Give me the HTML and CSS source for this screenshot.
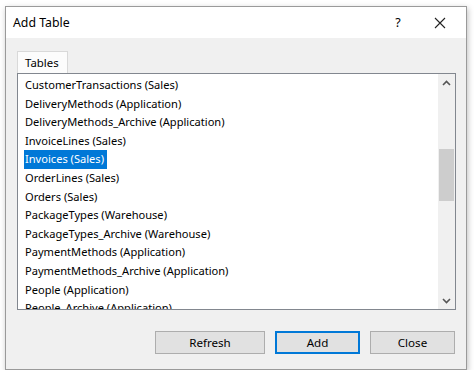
FILE: index.html
```
<!DOCTYPE html>
<html lang="en">
<head>
    <meta charset="UTF-8">
    <title>Add Table</title>
    <link rel="stylesheet" href="styles.css">
</head>
<body>
    <div class="dialog">
        <div class="title-bar">
            <span class="title">Add Table</span>
            <span class="help">?</span>
            <span class="close-x">
                <svg width="12" height="12" viewBox="0 0 12 12"><path d="M1 1 L11 11 M11 1 L1 11" stroke="#222" stroke-width="1.1" fill="none"/></svg>
            </span>
        </div>
        <div class="body">
            <div class="tabs">
                <div class="tab">Tables</div>
            </div>
            <div class="list-box">
                <ul class="list">
                    <li><span>CustomerTransactions (Sales)</span></li>
                    <li><span>DeliveryMethods (Application)</span></li>
                    <li><span>DeliveryMethods_Archive (Application)</span></li>
                    <li><span>InvoiceLines (Sales)</span></li>
                    <li class="selected"><span>Invoices (Sales)</span></li>
                    <li><span>OrderLines (Sales)</span></li>
                    <li><span>Orders (Sales)</span></li>
                    <li><span>PackageTypes (Warehouse)</span></li>
                    <li><span>PackageTypes_Archive (Warehouse)</span></li>
                    <li><span>PaymentMethods (Application)</span></li>
                    <li><span>PaymentMethods_Archive (Application)</span></li>
                    <li><span>People (Application)</span></li>
                    <li><span>People_Archive (Application)</span></li>
                </ul>
                <div class="scrollbar">
                    <div class="arrow">
                        <svg width="9" height="6" viewBox="0 0 9 6"><path d="M1 5 L4.5 1.5 L8 5" stroke="#555" stroke-width="1.6" fill="none"/></svg>
                    </div>
                    <div class="track">
                        <div class="thumb"></div>
                    </div>
                    <div class="arrow">
                        <svg width="9" height="6" viewBox="0 0 9 6"><path d="M1 1 L4.5 4.5 L8 1" stroke="#555" stroke-width="1.6" fill="none"/></svg>
                    </div>
                </div>
            </div>
            <div class="buttons">
                <button class="btn">Refresh</button>
                <button class="btn default">Add</button>
                <button class="btn">Close</button>
            </div>
        </div>
    </div>
</body>
</html>
```

FILE: styles.css
```
body {
    margin: 0;
    background: #ffffff;
    font-family: "Noto Sans", "Open Sans", sans-serif;
    color: #000;
}
.dialog {
    width: 460px;
    height: 362px;
    margin: 6px 0 0 5px;
    border: 1px solid #9a9a9a;
    background: #f0f0f0;
    box-shadow: 1px 2px 6px rgba(0, 0, 0, 0.25);
    display: flex;
    flex-direction: column;
}
.title-bar {
    height: 31px;
    background: #ffffff;
    display: flex;
    align-items: center;
    padding-left: 7px;
}
.title {
    font-size: 12.3px;
    flex: 1;
}
.help {
    font-size: 12.5px;
    width: 20px;
    margin-right: 26px;
    text-align: center;
}
.close-x {
    width: 14px;
    margin-right: 18px;
    display: flex;
    align-items: center;
}
.body {
    flex: 1;
    padding: 13px 10px 0 11px;
}
.tabs {
    display: flex;
    height: 22px;
}
.tab {
    border: 1px solid #d9d9d9;
    border-bottom: none;
    background: #fcfcfc;
    font-size: 11.4px;
    line-height: 21px;
    padding-left: 7px;
    box-sizing: border-box;
    width: 51px;
}
.list-box {
    height: 237px;
    border: 1px solid #82878f;
    background: #ffffff;
    display: flex;
    box-sizing: border-box;
}
.list {
    flex: 1;
    margin: 0;
    padding: 2px 0 0 6px;
    list-style: none;
    overflow: hidden;
}
.list li {
    height: 18.6px;
    font-size: 11.1px;
    line-height: 18.6px;
    white-space: nowrap;
}
.list li span {
    padding: 0 3px 0 1px;
    display: inline-block;
}
.list li.selected span {
    background: #0078d7;
    color: #ffffff;
}
.scrollbar {
    width: 17px;
    background: #f0f0f0;
    display: flex;
    flex-direction: column;
}
.arrow {
    height: 17px;
    display: flex;
    align-items: center;
    justify-content: center;
}
.track {
    flex: 1;
    padding-top: 58px;
}
.thumb {
    height: 52px;
    margin: 0 1px;
    background: #cdcdcd;
}
.buttons {
    display: flex;
    justify-content: flex-end;
    gap: 10px;
    margin-top: 21px;
    padding-right: 1px;
}
.btn {
    height: 23px;
    background: #e1e1e1;
    border: 1px solid #adadad;
    font-family: "Noto Sans", "Open Sans", sans-serif;
    font-size: 11.6px;
    padding: 0;
    width: 110px;
}
.btn.default {
    width: 85px;
    border: 2px solid #0078d7;
}
.btn:last-child {
    width: 85px;
}
```
